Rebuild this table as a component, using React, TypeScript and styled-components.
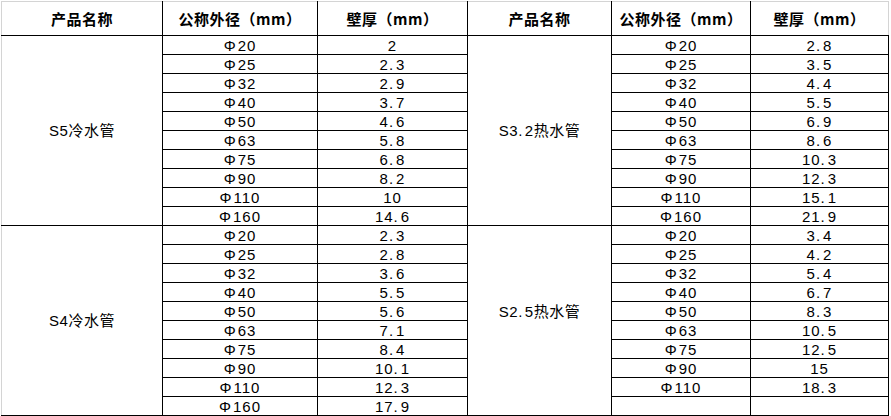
import * as React from 'react';
import styled, { createGlobalStyle } from 'styled-components';

const GlobalStyle = createGlobalStyle`
  html, body {
    margin: 0;
    padding: 0;
    background: #fff;
  }
  body {
    padding: 1px 0 0 1px;
    font-family: 'Liberation Sans', 'Noto Sans CJK SC', sans-serif;
    color: #000;
  }
`;

const grid = '#d4d4d4';
const line = '#000';

const Sheet = styled.table`
  border-collapse: collapse;
  table-layout: fixed;
  width: 887px;
`;

const HeadCell = styled.th<{ $first?: boolean; $last?: boolean }>`
  height: 33px;
  padding: 0;
  font-family: 'Noto Sans CJK SC', sans-serif;
  font-size: 15px;
  font-weight: 700;
  letter-spacing: 0.5px;
  text-align: center;
  vertical-align: middle;
  border-top: 1px solid ${grid};
  border-bottom: 1px solid ${line};
  border-left: 1px solid ${({ $first }) => ($first ? grid : line)};
  border-right: 1px solid ${({ $last }) => ($last ? grid : line)};
`;

const Row = styled.tr`
  height: 19px;
`;

const Cell = styled.td`
  height: 18px;
  padding: 0;
  font-size: 15px;
  line-height: 17px;
  letter-spacing: 1px;
  text-align: center;
  vertical-align: middle;
  border: 1px solid ${line};
  white-space: nowrap;
`;

const NameCell = styled(Cell)<{ $first?: boolean }>`
  letter-spacing: 0.5px;
  border-left: 1px solid ${({ $first }) => ($first ? grid : line)};
`;

// the spare row under a 9-row merged name cell reads as part of it
const SpareCell = styled(Cell)`
  border-top: hidden;
`;

const Phi = styled.span`
  margin-right: 1px;
`;

const Dot = styled.span`
  margin-right: 2px;
`;

type Group = { name: string; rows: [string, string][] };

const left: Group[] = [
  {
    name: 'S5冷水管',
    rows: [['20', '2'], ['25', '2.3'], ['32', '2.9'], ['40', '3.7'], ['50', '4.6'], ['63', '5.8'], ['75', '6.8'], ['90', '8.2'], ['110', '10'], ['160', '14.6']],
  },
  {
    name: 'S4冷水管',
    rows: [['20', '2.3'], ['25', '2.8'], ['32', '3.6'], ['40', '5.5'], ['50', '5.6'], ['63', '7.1'], ['75', '8.4'], ['90', '10.1'], ['110', '12.3'], ['160', '17.9']],
  },
];

const right: Group[] = [
  {
    name: 'S3.2热水管',
    rows: [['20', '2.8'], ['25', '3.5'], ['32', '4.4'], ['40', '5.5'], ['50', '6.9'], ['63', '8.6'], ['75', '10.3'], ['90', '12.3'], ['110', '15.1'], ['160', '21.9']],
  },
  {
    name: 'S2.5热水管',
    rows: [['20', '3.4'], ['25', '4.2'], ['32', '5.4'], ['40', '6.7'], ['50', '8.3'], ['63', '10.5'], ['75', '12.5'], ['90', '15'], ['110', '18.3']],
  },
];

function Num({ value }: { value: string }) {
  const [int, frac] = value.split('.');
  if (frac === undefined) return <>{value}</>;
  return <>{int}<Dot>.</Dot>{frac}</>;
}

function Size({ value }: { value?: string }) {
  if (!value) return null;
  return <><Phi>Φ</Phi>{value}</>;
}

export default function App() {
  const rows: React.ReactNode[] = [];

  for (let i = 0; i < 20; i++) {
    const g = Math.floor(i / 10);
    const r = i % 10;
    const l = left[g];
    const rt = right[g];
    const span = rt.rows.length;
    const rtRow = rt.rows[r];

    rows.push(
      <Row key={i}>
        {r === 0 && <NameCell $first rowSpan={10}><Num value={l.name} /></NameCell>}
        <Cell><Size value={l.rows[r][0]} /></Cell>
        <Cell><Num value={l.rows[r][1]} /></Cell>
        {r === 0 && <NameCell rowSpan={span}><Num value={rt.name} /></NameCell>}
        {r >= span && <SpareCell />}
        <Cell><Size value={rtRow?.[0]} /></Cell>
        <Cell>{rtRow && <Num value={rtRow[1]} />}</Cell>
      </Row>
    );
  }

  return (
    <>
      <GlobalStyle />
      <Sheet>
        <colgroup>
          <col style={{ width: 161 }} />
          <col style={{ width: 155 }} />
          <col style={{ width: 150 }} />
          <col style={{ width: 144 }} />
          <col style={{ width: 139 }} />
          <col style={{ width: 138 }} />
        </colgroup>
        <thead>
          <tr>
            <HeadCell $first>产品名称</HeadCell>
            <HeadCell>公称外径（mm）</HeadCell>
            <HeadCell>壁厚（mm）</HeadCell>
            <HeadCell>产品名称</HeadCell>
            <HeadCell>公称外径（mm）</HeadCell>
            <HeadCell $last>壁厚（mm）</HeadCell>
          </tr>
        </thead>
        <tbody>{rows}</tbody>
      </Sheet>
    </>
  );
}
